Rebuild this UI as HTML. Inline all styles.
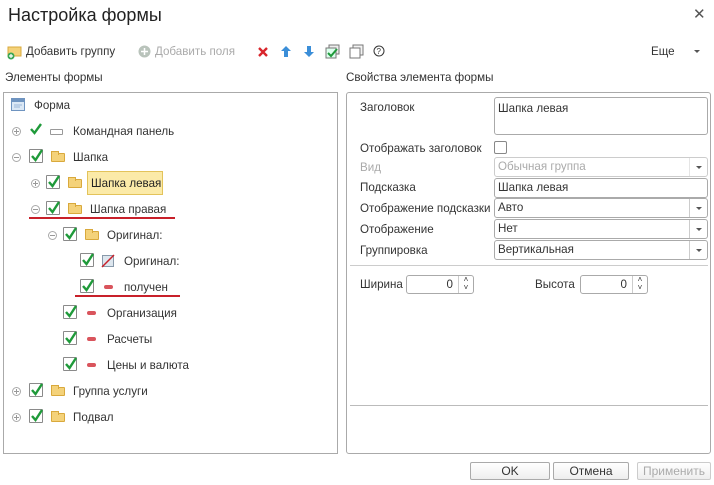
<!DOCTYPE html>
<html><head><meta charset="utf-8"><style>
*{margin:0;padding:0;box-sizing:border-box}
body{width:714px;height:485px;background:#fff;font-family:"Liberation Sans",Arial,sans-serif;font-size:11.6px;color:#333;position:relative;overflow:hidden}
.a{position:absolute;white-space:nowrap}
.cb{position:absolute;width:14px;height:14px;border:1px solid #8a8a8a;background:#fff;border-radius:1px}
.cb svg{position:absolute;left:0;top:-2px}
.exp{position:absolute;width:9px;height:9px;border:1px solid #aaa;border-radius:50%;font-size:0}
.exp:before{content:"";position:absolute;left:1px;top:3px;width:5px;height:1px;background:#999}
.exp.p:after{content:"";position:absolute;left:3px;top:1px;width:1px;height:5px;background:#999}
.fold{position:absolute;width:14px;height:9px;background:#f4d27a;border:1px solid #d9a93c;border-radius:1px}
.fold:before{content:"";position:absolute;left:-1px;top:-3px;width:6px;height:3px;background:#f4d27a;border:1px solid #d9a93c;border-bottom:none}
.dash{position:absolute;width:9px;height:4px;background:#d9545c;border-radius:2px}
.inp{position:absolute;border:1px solid #aaa;border-radius:3px;background:#fff;padding:0 3px;line-height:18px;font-size:11.6px;color:#333}
.dd{position:absolute;right:0;top:0;bottom:0;width:18px;border-left:1px solid #ccc}
.dd:after{content:"";position:absolute;left:6px;top:8px;border:3px solid transparent;border-top:3px solid #555}
.btn{position:absolute;top:462px;height:18px;border:1px solid #aaa;border-radius:2px;background:linear-gradient(#fff,#eee);text-align:center;line-height:16px;font-size:12px}
</style></head><body>
<div class="a" style="left:8px;top:5px;font-size:18px;color:#222">Настройка формы</div>
<div class="a" style="left:693px;top:5px;font-size:15px;color:#555">✕</div>

<svg class="a" style="left:7px;top:44px" width="16" height="16"><rect x="1" y="3" width="13" height="9" fill="#f4d27a" stroke="#d9a93c"/><circle cx="4" cy="12" r="3.5" fill="#3aa655"/><path d="M4 10v4M2 12h4" stroke="#fff" stroke-width="1.2"/></svg>
<div class="a" style="left:26px;top:45px">Добавить группу</div>
<svg class="a" style="left:138px;top:45px" width="13" height="13"><circle cx="6.5" cy="6.5" r="6" fill="#b9c3bb"/><path d="M6.5 3v7M3 6.5h7" stroke="#fff" stroke-width="1.5"/></svg>
<div class="a" style="left:155px;top:45px;color:#aaa">Добавить поля</div>
<svg class="a" style="left:257px;top:46px" width="12" height="12"><path d="M2 2l8 8M10 2l-8 8" stroke="#d9262c" stroke-width="2.4"/></svg>
<svg class="a" style="left:280px;top:45px" width="12" height="13"><path d="M6 1L1 6h3v6h4V6h3z" fill="#3b8ed8"/></svg>
<svg class="a" style="left:303px;top:45px" width="12" height="13"><path d="M6 12L1 7h3V1h4v6h3z" fill="#3b8ed8"/></svg>
<svg class="a" style="left:325px;top:44px" width="15" height="15"><rect x="4" y="1" width="10" height="9" fill="#eee" stroke="#777"/><rect x="1" y="4" width="10" height="10" fill="#dfe" stroke="#777"/><path d="M3 9l3 3 6-7" stroke="#1f9a3a" stroke-width="2" fill="none"/></svg>
<svg class="a" style="left:349px;top:44px" width="15" height="15"><rect x="4" y="1" width="10" height="10" fill="#f3f3f3" stroke="#777"/><rect x="1" y="4" width="10" height="10" fill="#fff" stroke="#777"/></svg>
<svg class="a" style="left:373px;top:45px" width="12" height="12"><circle cx="6" cy="6" r="5" fill="none" stroke="#333"/><text x="3.5" y="9" font-size="8" font-family="Liberation Sans" fill="#333">?</text></svg>
<div class="a" style="left:651px;top:45px">Еще</div>
<div class="a" style="left:694px;top:50px;border:3px solid transparent;border-top:3px solid #555"></div>

<div class="a" style="left:5px;top:71px">Элементы формы</div>
<div class="a" style="left:346px;top:71px">Свойства элемента формы</div>

<div class="a" style="left:3px;top:92px;width:335px;height:362px;border:1px solid #aaa"></div>
<svg class="a" style="left:11px;top:98px" width="14" height="13"><rect x="0.5" y="0.5" width="13" height="12" fill="#dbe8f5" stroke="#6f94c0"/><rect x="1" y="1" width="12" height="3" fill="#6f94c0"/><path d="M3 7h8M3 9h6" stroke="#9bb6d6"/></svg>
<div class="a" style="left:34px;top:99px">Форма</div>

<div class="exp p" style="left:12px;top:127px"></div>
<svg class="a" style="left:29px;top:122px" width="14" height="14"><path d="M2 7l3.5 4L12 2" stroke="#1f9a3a" stroke-width="2.4" fill="none"/></svg>
<div class="a" style="left:50px;top:129px;width:13px;height:6px;border:1px solid #999;border-radius:1px"></div>
<div class="a" style="left:73px;top:125px">Командная панель</div>

<div class="exp" style="left:12px;top:153px"></div>
<div class="cb" style="left:29px;top:149px"><svg width="14" height="16"><path d="M2 8l3.5 4L12 2" stroke="#1f9a3a" stroke-width="2.4" fill="none"/></svg></div>
<div class="fold" style="left:51px;top:153px"></div>
<div class="a" style="left:73px;top:151px">Шапка</div>

<div class="exp p" style="left:31px;top:179px"></div>
<div class="cb" style="left:46px;top:175px"><svg width="14" height="16"><path d="M2 8l3.5 4L12 2" stroke="#1f9a3a" stroke-width="2.4" fill="none"/></svg></div>
<div class="fold" style="left:68px;top:179px"></div>
<div class="a" style="left:87px;top:171px;width:76px;height:24px;background:#fbeaa8;border:1px solid #e3c35a"></div>
<div class="a" style="left:91px;top:177px;color:#222">Шапка левая</div>

<div class="exp" style="left:31px;top:205px"></div>
<div class="cb" style="left:46px;top:201px"><svg width="14" height="16"><path d="M2 8l3.5 4L12 2" stroke="#1f9a3a" stroke-width="2.4" fill="none"/></svg></div>
<div class="fold" style="left:68px;top:205px"></div>
<div class="a" style="left:90px;top:203px">Шапка правая</div>
<div class="a" style="left:29px;top:217px;width:146px;height:2px;background:#c8202a"></div>

<div class="exp" style="left:48px;top:231px"></div>
<div class="cb" style="left:63px;top:227px"><svg width="14" height="16"><path d="M2 8l3.5 4L12 2" stroke="#1f9a3a" stroke-width="2.4" fill="none"/></svg></div>
<div class="fold" style="left:85px;top:231px"></div>
<div class="a" style="left:107px;top:229px">Оригинал:</div>

<div class="cb" style="left:80px;top:253px"><svg width="14" height="16"><path d="M2 8l3.5 4L12 2" stroke="#1f9a3a" stroke-width="2.4" fill="none"/></svg></div>
<svg class="a" style="left:101px;top:254px" width="14" height="14"><rect x="1.5" y="1.5" width="11" height="11" fill="#dde6ee" stroke="#8899aa"/><path d="M1 13L13 1" stroke="#c8202a" stroke-width="1.5"/></svg>
<div class="a" style="left:124px;top:255px">Оригинал:</div>

<div class="cb" style="left:80px;top:279px"><svg width="14" height="16"><path d="M2 8l3.5 4L12 2" stroke="#1f9a3a" stroke-width="2.4" fill="none"/></svg></div>
<div class="dash" style="left:104px;top:285px"></div>
<div class="a" style="left:124px;top:281px">получен</div>
<div class="a" style="left:75px;top:295px;width:105px;height:2px;background:#c8202a"></div>

<div class="cb" style="left:63px;top:305px"><svg width="14" height="16"><path d="M2 8l3.5 4L12 2" stroke="#1f9a3a" stroke-width="2.4" fill="none"/></svg></div>
<div class="dash" style="left:87px;top:311px"></div>
<div class="a" style="left:107px;top:307px">Организация</div>

<div class="cb" style="left:63px;top:331px"><svg width="14" height="16"><path d="M2 8l3.5 4L12 2" stroke="#1f9a3a" stroke-width="2.4" fill="none"/></svg></div>
<div class="dash" style="left:87px;top:337px"></div>
<div class="a" style="left:107px;top:333px">Расчеты</div>

<div class="cb" style="left:63px;top:357px"><svg width="14" height="16"><path d="M2 8l3.5 4L12 2" stroke="#1f9a3a" stroke-width="2.4" fill="none"/></svg></div>
<div class="dash" style="left:87px;top:363px"></div>
<div class="a" style="left:107px;top:359px">Цены и валюта</div>

<div class="exp p" style="left:12px;top:387px"></div>
<div class="cb" style="left:29px;top:383px"><svg width="14" height="16"><path d="M2 8l3.5 4L12 2" stroke="#1f9a3a" stroke-width="2.4" fill="none"/></svg></div>
<div class="fold" style="left:51px;top:387px"></div>
<div class="a" style="left:73px;top:385px">Группа услуги</div>

<div class="exp p" style="left:12px;top:413px"></div>
<div class="cb" style="left:29px;top:409px"><svg width="14" height="16"><path d="M2 8l3.5 4L12 2" stroke="#1f9a3a" stroke-width="2.4" fill="none"/></svg></div>
<div class="fold" style="left:51px;top:413px"></div>
<div class="a" style="left:73px;top:411px">Подвал</div>

<div class="a" style="left:346px;top:92px;width:365px;height:362px;border:1px solid #aaa;border-radius:3px"></div>
<div class="a" style="left:360px;top:101px">Заголовок</div>
<div class="inp" style="left:494px;top:97px;width:214px;height:38px;padding-top:2px">Шапка левая</div>
<div class="a" style="left:360px;top:142px">Отображать заголовок</div>
<div class="a" style="left:494px;top:141px;width:13px;height:13px;border:1px solid #888;border-radius:2px"></div>
<div class="a" style="left:360px;top:161px;color:#aaa">Вид</div>
<div class="inp" style="left:494px;top:157px;width:214px;height:20px;color:#aaa;border-color:#ccc">Обычная группа<span class="dd" style="border-color:#e5e5e5"></span></div>
<div class="a" style="left:360px;top:181px">Подсказка</div>
<div class="inp" style="left:494px;top:178px;width:214px;height:20px">Шапка левая</div>
<div class="a" style="left:360px;top:202px">Отображение подсказки</div>
<div class="inp" style="left:494px;top:198px;width:214px;height:20px">Авто<span class="dd"></span></div>
<div class="a" style="left:360px;top:223px">Отображение</div>
<div class="inp" style="left:494px;top:219px;width:214px;height:20px">Нет<span class="dd"></span></div>
<div class="a" style="left:360px;top:244px">Группировка</div>
<div class="inp" style="left:494px;top:240px;width:214px;height:20px">Вертикальная<span class="dd"></span></div>
<div class="a" style="left:350px;top:265px;width:358px;height:1px;background:#ccc"></div>
<div class="a" style="left:360px;top:278px">Ширина</div>
<div class="inp" style="left:406px;top:275px;width:68px;height:19px;text-align:right;padding-right:20px">0<span class="a" style="right:0;top:0;bottom:0;width:15px;border-left:1px solid #ccc;font-size:8px;line-height:8px;text-align:center">˄<br>˅</span></div>
<div class="a" style="left:535px;top:278px">Высота</div>
<div class="inp" style="left:580px;top:275px;width:68px;height:19px;text-align:right;padding-right:20px">0<span class="a" style="right:0;top:0;bottom:0;width:15px;border-left:1px solid #ccc;font-size:8px;line-height:8px;text-align:center">˄<br>˅</span></div>
<div class="a" style="left:350px;top:405px;width:358px;height:1px;background:#bbb"></div>

<div class="btn" style="left:470px;width:80px">OK</div>
<div class="btn" style="left:553px;width:76px">Отмена</div>
<div class="btn" style="left:637px;width:74px;color:#aaa;border-color:#ccc">Применить</div>
</body></html>
